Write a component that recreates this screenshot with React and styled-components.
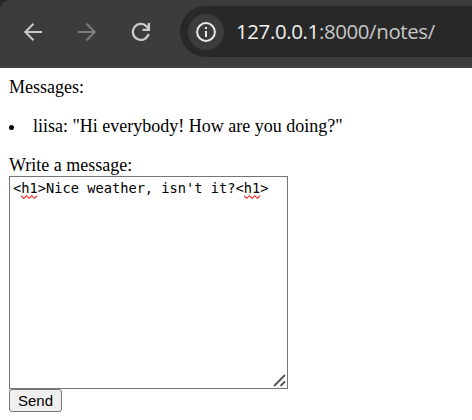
import React from "react";
import styled, { createGlobalStyle } from "styled-components";

const GlobalStyle = createGlobalStyle`
  * { box-sizing: border-box; }
  body { margin: 0; background: #fff; overflow: hidden; }
`;

const Window = styled.div`
  width: 472px;
  height: 420px;
  overflow: hidden;
  background: #fff;
`;

const Backdrop = styled.div`
  background: #262626;
`;

const Toolbar = styled.header`
  display: flex;
  align-items: center;
  height: 68px;
  padding: 0 0 4px 15px;
  background: #3c3c3c;
  border-bottom: 1px solid #444;
  border-top-left-radius: 9px;
`;

const NavButton = styled.button`
  display: grid;
  place-items: center;
  width: 36px;
  height: 36px;
  margin-right: 18px;
  padding: 0;
  border: 0;
  background: none;
  color: ${(p) => (p.$dim ? "#7d7d7d" : "#c9c9c9")};
`;

const AddressBar = styled.div`
  display: flex;
  align-items: center;
  flex: 1;
  height: 51px;
  margin-left: 3px;
  padding-left: 8px;
  background: #282828;
  border-radius: 26px 0 0 26px;
`;

const SiteInfo = styled.span`
  display: grid;
  place-items: center;
  width: 36px;
  height: 36px;
  border-radius: 50%;
  background: #3c3c3c;
  color: #e8e8e8;
`;

const Address = styled.span`
  margin: -2px 0 0 12px;
  font: 20.4px/28px "Open Sans", "Noto Sans", sans-serif;
  letter-spacing: -0.35px;
  white-space: nowrap;
  color: #c7c7c7;
`;

const Host = styled.span`
  color: #f0f0f0;
`;

const Page = styled.main`
  padding: 9px 0 0 9px;
  font: 18px/21px "Liberation Serif", serif;
  color: #000;
`;

const Line = styled.p`
  margin: 0;
`;

const Messages = styled.ul`
  margin: 18px 0;
  padding: 0;
  list-style: none;
`;

const Message = styled.li`
  display: flex;
  align-items: center;
  white-space: nowrap;

  &::before {
    content: "";
    width: 5px;
    height: 5px;
    margin: 2px 19px 0 0;
    border-radius: 50%;
    background: #000;
  }
`;

const MessageBox = styled.div`
  position: relative;
  width: 279px;
  height: 213px;
  padding: 2px 3px;
  border: 1px solid #767676;
  font: 13.7px/19px "DejaVu Sans Mono", monospace;
  white-space: pre;
`;

const Misspelled = styled.span`
  position: relative;
`;

const Wave = styled.svg`
  position: absolute;
  left: 0;
  bottom: -3px;
`;

const Grip = styled.svg`
  position: absolute;
  right: 1px;
  bottom: 1px;
`;

const SendButton = styled.button`
  display: block;
  width: 53px;
  height: 23px;
  padding: 0;
  border: 1px solid #767676;
  border-radius: 3px;
  background: #efefef;
  color: #000;
  font: 15px/20px "Liberation Sans", sans-serif;
`;

function Tag() {
  return (
    <>
      {"<"}
      <Misspelled>
        h1
        <Wave width="17" height="4" viewBox="0 0 17 4">
          <path d="M0 .7L2.7 3.3L5.4 .7L8.1 3.3L10.8 .7L13.5 3.3L16.2 .7" fill="none" stroke="#f22" strokeWidth="1.1" />
        </Wave>
      </Misspelled>
      {">"}
    </>
  );
}

const stroke = { fill: "none", stroke: "currentColor", strokeWidth: 2 };

export default function App() {
  return (
    <Window>
      <GlobalStyle />
      <Backdrop>
        <Toolbar>
          <NavButton aria-label="Back">
            <svg width="20" height="20" viewBox="0 0 20 20" {...stroke}>
              <path d="M19 10H2.5M10.5 1.8L2.3 10L10.5 18.2" />
            </svg>
          </NavButton>
          <NavButton aria-label="Forward" $dim>
            <svg width="20" height="20" viewBox="0 0 20 20" {...stroke}>
              <path d="M1 10H17.5M9.5 1.8L17.7 10L9.5 18.2" />
            </svg>
          </NavButton>
          <NavButton aria-label="Reload">
            <svg width="20" height="20" viewBox="0 0 20 20" {...stroke} strokeWidth="2.3">
              <path d="M17.6 12A8 8 0 1 1 15.8 4.5L17.6 6.8M17.9 1V7.8H11.5" />
            </svg>
          </NavButton>
          <AddressBar>
            <SiteInfo>
              <svg width="20" height="20" viewBox="0 0 20 20" {...stroke}>
                <circle cx="10" cy="10" r="8.9" />
                <path d="M10 9V15M10 5V7" />
              </svg>
            </SiteInfo>
            <Address>
              <Host>127.0.0.1</Host>:8000/notes/
            </Address>
          </AddressBar>
        </Toolbar>
      </Backdrop>
      <Page>
        <Line>Messages:</Line>
        <Messages>
          <Message>liisa: "Hi everybody! How are you doing?"</Message>
        </Messages>
        <Line>Write a message:</Line>
        <MessageBox>
          <Tag />
          Nice weather, isn't it?
          <Tag />
          <Grip width="13" height="13" viewBox="0 0 13 13">
            <path d="M1 12L12 1M7.5 12L12 7.5" fill="none" stroke="#555" strokeWidth="1.8" />
          </Grip>
        </MessageBox>
        <SendButton>Send</SendButton>
      </Page>
    </Window>
  );
}
